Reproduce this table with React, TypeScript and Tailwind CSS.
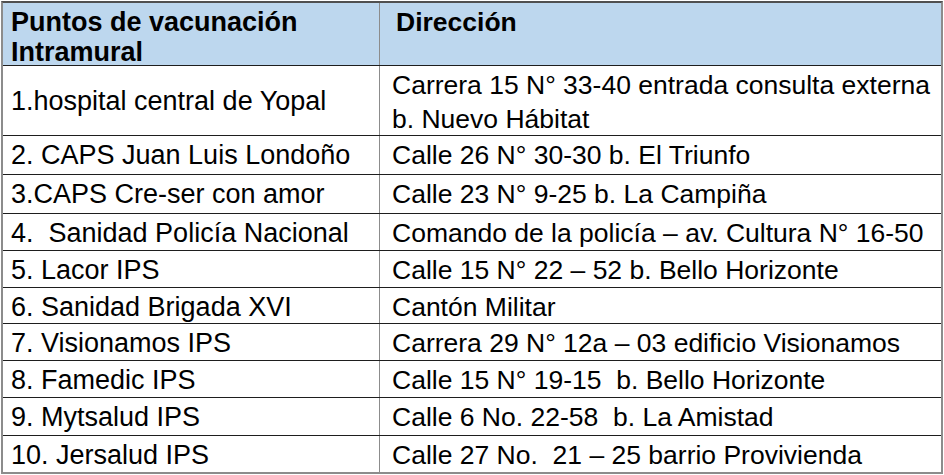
import React from 'react';

type Row = { name: string; addr: string[]; h: string };

const rows: Row[] = [
    { name: '1.hospital central de Yopal', addr: ['Carrera 15 N° 33-40 entrada consulta externa', 'b. Nuevo Hábitat'], h: 'h-[70px]' },
    { name: '2. CAPS Juan Luis Londoño', addr: ['Calle 26 N° 30-30 b. El Triunfo'], h: 'h-[39px]' },
    { name: '3.CAPS Cre-ser con amor', addr: ['Calle 23 N° 9-25 b. La Campiña'], h: 'h-[39px]' },
    { name: '4.  Sanidad Policía Nacional', addr: ['Comando de la policía – av. Cultura N° 16-50'], h: 'h-[37px]' },
    { name: '5. Lacor IPS', addr: ['Calle 15 N° 22 – 52 b. Bello Horizonte'], h: 'h-[37px]' },
    { name: '6. Sanidad Brigada XVI', addr: ['Cantón Militar'], h: 'h-[36px]' },
    { name: '7. Visionamos IPS', addr: ['Carrera 29 N° 12a – 03 edificio Visionamos'], h: 'h-[37px]' },
    { name: '8. Famedic IPS', addr: ['Calle 15 N° 19-15  b. Bello Horizonte'], h: 'h-[37px]' },
    { name: '9. Mytsalud IPS', addr: ['Calle 6 No. 22-58  b. La Amistad'], h: 'h-[38px]' },
    { name: '10. Jersalud IPS', addr: ['Calle 27 No.  21 – 25 barrio Provivienda'], h: 'h-[36px]' },
];

export default function App() {
    return (
        <div className="w-[944px] h-[475px] bg-white pt-[1px] pl-[1px] font-['Liberation_Sans',Arial,sans-serif] text-black text-[27px]">
            <div className="w-[942px] border-2 border-[#8c8c8c] border-t-[#505050]">
                {/* Encabezado */}
                <div className="flex h-[63px] bg-[#bdd7ee] border-b border-b-[#1e1e1e] font-bold leading-[30px]">
                    <div className="w-[377px] border-r border-r-[#8c8c8c] pl-[8px] pt-[4px]">
                        Puntos de vacunación<br />Intramural
                    </div>
                    <div className="flex-1 pl-[16px] pt-[4px] text-[26.5px]">Dirección</div>
                </div>

                {/* Filas */}
                {rows.map((r, i) => (
                    <div
                        key={i}
                        className={`flex ${r.h} ${i < rows.length - 1 ? 'border-b border-b-[#1e1e1e]' : ''}`}
                    >
                        <div
                            className={`w-[377px] border-r border-r-[#8c8c8c] pl-[8px] leading-[30px] whitespace-pre ${
                                r.addr.length > 1 ? 'flex items-center' : 'pt-[4px]'
                            }`}
                        >
                            {r.name}
                        </div>
                        <div
                            className={`flex-1 pl-[12px] whitespace-pre text-[26.5px] ${
                                r.addr.length > 1 ? 'leading-[34px] pt-[2px]' : 'leading-[30px] pt-[4px]'
                            }`}
                        >
                            {r.addr.map((a, j) => (
                                <div key={j}>{a}</div>
                            ))}
                        </div>
                    </div>
                ))}
            </div>
        </div>
    );
}
